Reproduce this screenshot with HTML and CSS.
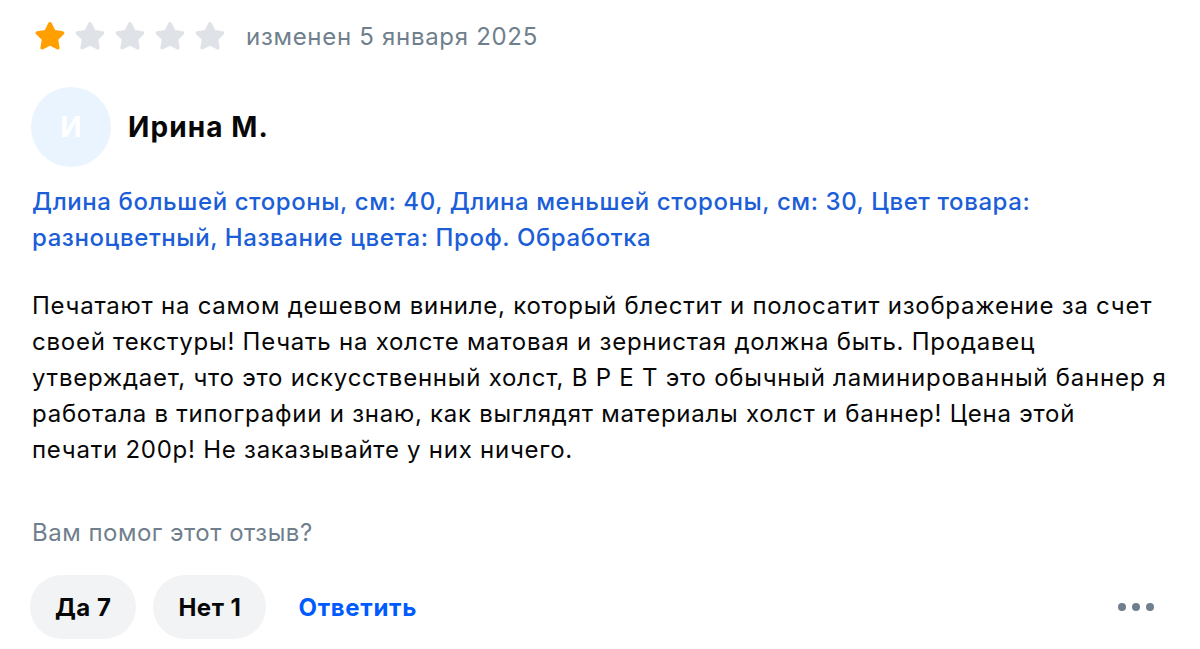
FILE: index.html
```html
<!DOCTYPE html>
<html lang="ru">
<head>
<meta charset="utf-8">
<link rel="stylesheet" href="styles.css">
</head>
<body>
<div class="review">
  <div class="rating-row">
    <div class="stars">
      <svg class="star" viewBox="0 0 24 24"><path class="on" d="M12 2.6c.5 0 .9.3 1.1.7l2.3 4.7 5.1.8c.5.1.9.4 1 .8.2.5 0 1-.3 1.3l-3.7 3.6.9 5.1c.1.5-.1.9-.5 1.2-.4.3-.9.3-1.3.1L12 18.5l-4.6 2.4c-.4.2-.9.2-1.3-.1-.4-.3-.6-.8-.5-1.2l.9-5.1-3.7-3.6c-.4-.3-.5-.8-.3-1.3.1-.4.5-.8 1-.8l5.1-.8 2.3-4.7c.2-.4.6-.7 1.1-.7z"/></svg>
      <svg class="star" viewBox="0 0 24 24"><path class="off" d="M12 2.6c.5 0 .9.3 1.1.7l2.3 4.7 5.1.8c.5.1.9.4 1 .8.2.5 0 1-.3 1.3l-3.7 3.6.9 5.1c.1.5-.1.9-.5 1.2-.4.3-.9.3-1.3.1L12 18.5l-4.6 2.4c-.4.2-.9.2-1.3-.1-.4-.3-.6-.8-.5-1.2l.9-5.1-3.7-3.6c-.4-.3-.5-.8-.3-1.3.1-.4.5-.8 1-.8l5.1-.8 2.3-4.7c.2-.4.6-.7 1.1-.7z"/></svg>
      <svg class="star" viewBox="0 0 24 24"><path class="off" d="M12 2.6c.5 0 .9.3 1.1.7l2.3 4.7 5.1.8c.5.1.9.4 1 .8.2.5 0 1-.3 1.3l-3.7 3.6.9 5.1c.1.5-.1.9-.5 1.2-.4.3-.9.3-1.3.1L12 18.5l-4.6 2.4c-.4.2-.9.2-1.3-.1-.4-.3-.6-.8-.5-1.2l.9-5.1-3.7-3.6c-.4-.3-.5-.8-.3-1.3.1-.4.5-.8 1-.8l5.1-.8 2.3-4.7c.2-.4.6-.7 1.1-.7z"/></svg>
      <svg class="star" viewBox="0 0 24 24"><path class="off" d="M12 2.6c.5 0 .9.3 1.1.7l2.3 4.7 5.1.8c.5.1.9.4 1 .8.2.5 0 1-.3 1.3l-3.7 3.6.9 5.1c.1.5-.1.9-.5 1.2-.4.3-.9.3-1.3.1L12 18.5l-4.6 2.4c-.4.2-.9.2-1.3-.1-.4-.3-.6-.8-.5-1.2l.9-5.1-3.7-3.6c-.4-.3-.5-.8-.3-1.3.1-.4.5-.8 1-.8l5.1-.8 2.3-4.7c.2-.4.6-.7 1.1-.7z"/></svg>
      <svg class="star" viewBox="0 0 24 24"><path class="off" d="M12 2.6c.5 0 .9.3 1.1.7l2.3 4.7 5.1.8c.5.1.9.4 1 .8.2.5 0 1-.3 1.3l-3.7 3.6.9 5.1c.1.5-.1.9-.5 1.2-.4.3-.9.3-1.3.1L12 18.5l-4.6 2.4c-.4.2-.9.2-1.3-.1-.4-.3-.6-.8-.5-1.2l.9-5.1-3.7-3.6c-.4-.3-.5-.8-.3-1.3.1-.4.5-.8 1-.8l5.1-.8 2.3-4.7c.2-.4.6-.7 1.1-.7z"/></svg>
    </div>
    <span class="date">изменен 5 января 2025</span>
  </div>

  <div class="author">
    <div class="avatar">И</div>
    <span class="name">Ирина М.</span>
  </div>

  <p class="params">Длина большей стороны, см: 40, Длина меньшей стороны, см: 30, Цвет товара:<br>разноцветный, Название цвета: Проф. Обработка</p>

  <p class="text">Печатают на самом дешевом виниле, который блестит и полосатит изображение за счет<br>своей текстуры! Печать на холсте матовая и зернистая должна быть. Продавец<br>утверждает, что это искусственный холст, В Р Е Т это обычный ламинированный баннер я<br>работала в типографии и знаю, как выглядят материалы холст и баннер! Цена этой<br>печати 200р! Не заказывайте у них ничего.</p>

  <p class="question">Вам помог этот отзыв?</p>

  <div class="actions">
    <button class="pill">Да 7</button>
    <button class="pill">Нет 1</button>
    <button class="reply">Ответить</button>
    <button class="more" aria-label="Ещё"><span class="dot"></span><span class="dot"></span><span class="dot"></span></button>
  </div>
</div>
</body>
</html>
```

FILE: styles.css
```css
* { box-sizing: border-box; }
html, body { margin: 0; padding: 0; background: #fff; }
body {
  font-family: Inter, "Noto Sans", sans-serif;
  color: #070707;
}
.review {
  padding: 20px 32px 0 32px;
  width: 1200px;
}
.rating-row {
  display: flex;
  align-items: center;
  height: 32px;
}
.stars { display: flex; gap: 4px; }
.star { width: 36px; height: 36px; display: block; }
.star .on { fill: #ffa000; }
.star .off { fill: #dfe2e6; }
.date {
  margin-left: 18px;
  font-size: 24px;
  letter-spacing: 0.7px;
  color: #707f8d;
}
.author {
  display: flex;
  align-items: center;
  margin-top: 35px;
  margin-left: -1px;
}
.avatar {
  width: 80px; height: 80px;
  border-radius: 50%;
  background: #eaf4fe;
  color: #fff;
  display: flex; align-items: center; justify-content: center;
  font-size: 28px;
  font-weight: 700;
}
.name {
  margin-left: 17px;
  font-size: 28px;
  font-weight: 700;
  letter-spacing: 1.1px;
  color: #070707;
}
.params {
  margin: 17px 0 0;
  font-size: 24px;
  line-height: 36px;
  letter-spacing: 0.58px;
  color: #1b5ed8;
  font-weight: 500;
  white-space: nowrap;
}
.text {
  margin: 32px 0 0;
  font-size: 24px;
  line-height: 36px;
  letter-spacing: 0.75px;
  color: #070707;
  white-space: nowrap;
}
.question {
  margin: 49px 0 0;
  font-size: 24px;
  line-height: 32px;
  letter-spacing: 0.5px;
  color: #707f8d;
}
.actions {
  display: flex;
  align-items: center;
  margin-top: 26px;
  margin-left: -2px;
}
.pill {
  height: 64px;
  padding: 0 25px;
  border: 0;
  border-radius: 32px;
  background: #f2f3f5;
  font-family: inherit;
  font-size: 24px;
  font-weight: 700;
  letter-spacing: 0.5px;
  color: #070707;
  margin-right: 17px;
}
.reply {
  border: 0;
  background: none;
  font-family: inherit;
  font-size: 24px;
  font-weight: 700;
  letter-spacing: 0.7px;
  color: #005bff;
  padding: 0 15px;
}
.more {
  margin-left: auto;
  margin-right: 14px;
  border: 0;
  background: none;
  display: flex;
  gap: 6px;
  padding: 0;
}
.dot {
  width: 8px; height: 8px;
  border-radius: 50%;
  background: #707f8d;
}
```
